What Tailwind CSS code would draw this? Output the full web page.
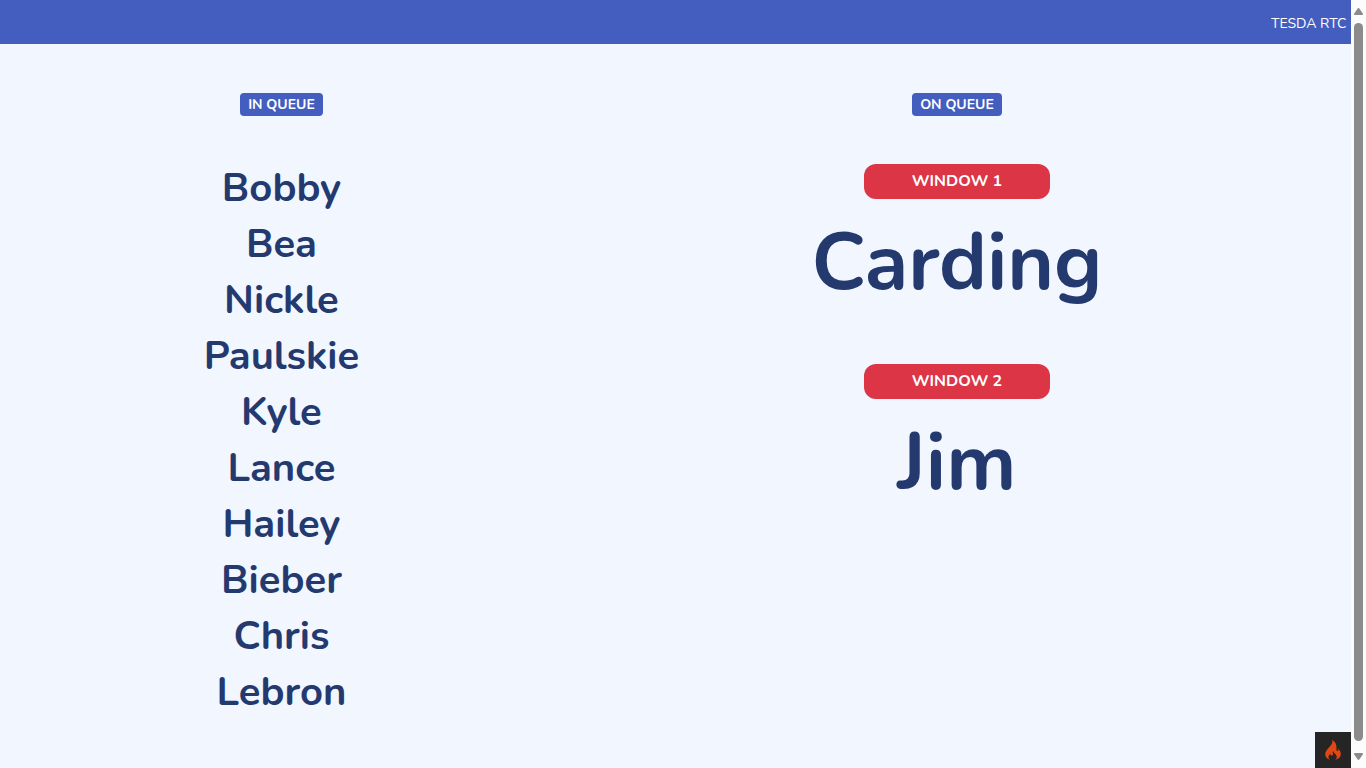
<!DOCTYPE html>
<html lang="en">
<head>
<meta charset="utf-8">
<title>Queue</title>
<script src="https://cdn.jsdelivr.net/npm/@tailwindcss/browser@4"></script>
</head>
<body class="flex h-screen overflow-hidden bg-[#f1f6ff] font-[Nunito,Lato,sans-serif] text-[#243a6f]">
<div class="relative flex min-w-0 flex-1 flex-col">
  <header class="flex h-11 shrink-0 items-center justify-end bg-[#435ebe] pt-1 text-sm text-white">
    <p class="w-20 overflow-hidden whitespace-nowrap">TESDA RTC -</p>
  </header>
  <main class="grid grid-cols-12 pt-[49px] text-center">
    <section class="col-span-5 flex flex-col items-center">
      <h2 class="rounded bg-[#435ebe] px-2 text-sm leading-[23px] font-bold text-white">IN QUEUE</h2>
      <ul class="mt-11 text-[40px] leading-14 font-bold">
        <li>Bobby</li>
        <li>Bea</li>
        <li>Nickle</li>
        <li>Paulskie</li>
        <li>Kyle</li>
        <li>Lance</li>
        <li>Hailey</li>
        <li>Bieber</li>
        <li>Chris</li>
        <li>Lebron</li>
      </ul>
    </section>
    <section class="col-span-7 flex flex-col items-center">
      <h2 class="rounded bg-[#435ebe] px-2 text-sm leading-[23px] font-bold text-white">ON QUEUE</h2>
      <div class="mt-12 flex h-[200px] flex-col items-center">
        <h3 class="w-[186px] rounded-xl bg-[#dc3545] text-base leading-[35px] font-bold text-white">WINDOW 1</h3>
        <p class="mt-4 text-[80px] leading-24 font-bold">Carding</p>
      </div>
      <div class="flex h-[200px] flex-col items-center">
        <h3 class="w-[186px] rounded-xl bg-[#dc3545] text-base leading-[35px] font-bold text-white">WINDOW 2</h3>
        <p class="mt-4 text-[80px] leading-24 font-bold">Jim</p>
      </div>
    </section>
  </main>
  <button type="button" aria-label="Debug toolbar" class="absolute right-0 bottom-0 flex size-9 items-center justify-center bg-[#252525]">
    <svg class="h-5 w-4" viewBox="0 0 16 20" fill="#dd4814"><path d="M7.200 0c.9 2.700-.7 4.600-2.600 6.700C2.500 9 .2 11.300.2 14.200c0 2.700 1.900 4.700 4.900 5.600-1.200-.9-1.800-1.900-1.600-3.200.2-1.300 1.300-2.100 2-3.100-.2 1.400.4 2.100 1.200 2.100 1 0 1.500-.8 1.300-1.800-.2-1-.5-1.800.3-2.800.2 1.300 1 2.100 1.900 3 2.300 2.200 2 4.400-.1 5.800 3.400-.8 5.700-2.900 5.700-5.900 0-2.300-1.300-4.100-2.800-5.500.4 1.200.3 2.400-.6 2.500-1.100.1-1.100-1.300-.9-2.500C11.800 5 10.500 1.700 7.200 0z"/></svg>
  </button>
</div>
<div class="flex w-[15px] shrink-0 flex-col items-center bg-[#fcfcfc] pt-2 pb-2" aria-hidden="true">
  <svg class="h-[7px] w-[9px] shrink-0" viewBox="0 0 9 7" fill="#8b8b8b"><path d="M3.700.5Q4.500-.3 5.300.5L8.800 5.500Q9.200 7 8 7H1Q-.2 7 .2 5.500z"/></svg>
  <div class="mt-2 mb-3 w-[9px] flex-1 rounded-full bg-[#8b8b8b]"></div>
  <svg class="h-[7px] w-[9px] shrink-0" viewBox="0 0 9 7" fill="#8b8b8b"><path d="M3.700 6.500Q4.500 7.300 5.300 6.500L8.800 1.500Q9.200 0 8 0H1Q-.2 0 .2 1.500z"/></svg>
</div>
</body>
</html>
